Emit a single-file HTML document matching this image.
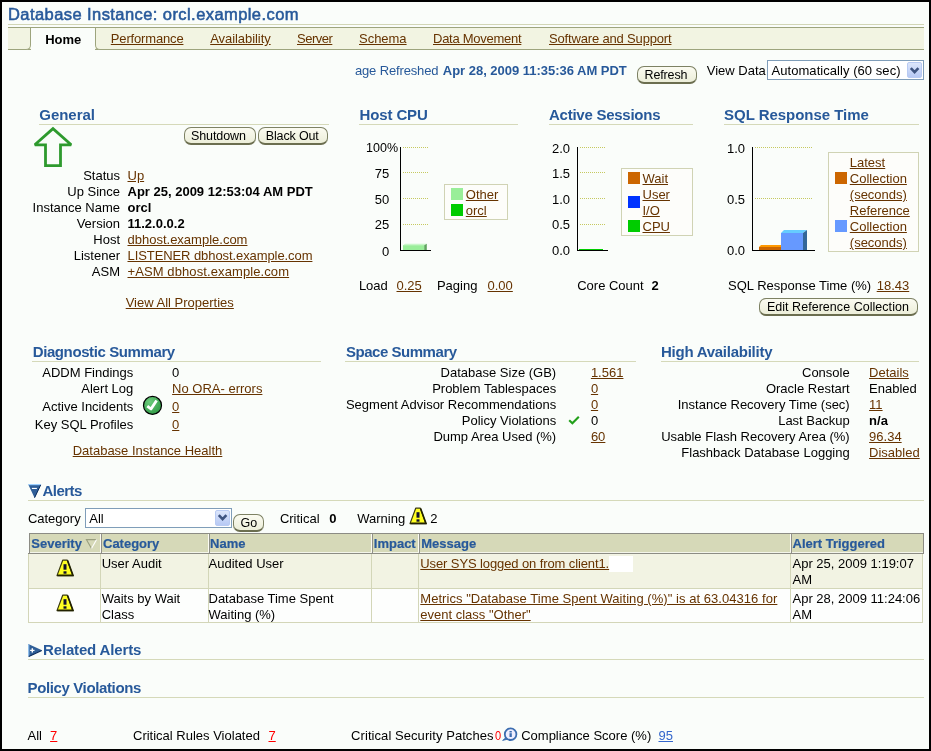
<!DOCTYPE html>
<html><head><meta charset="utf-8"><style>
html,body{margin:0;padding:0;width:931px;height:751px;overflow:hidden;background:#000}
#pg{position:absolute;left:2px;top:2px;width:927px;height:747px;background:#fafdfa;overflow:hidden}
#in{position:absolute;left:-2px;top:-2px;width:931px;height:751px}
.t{position:absolute;white-space:nowrap;line-height:16px;font-family:"Liberation Sans",sans-serif}
#in{will-change:transform}
</style></head><body><div id="pg"><div id="in">
<div class="t" style="left:8.00px;top:6.00px;font-size:16.5px;color:#27599a;letter-spacing:0.425px;-webkit-text-stroke:0.55px #27599a;">Database Instance: orcl.example.com</div>
<div style="position:absolute;left:8px;top:24px;width:916px;height:1px;background:#d2d6b6"></div>
<div style="position:absolute;left:8px;top:27px;width:916px;height:1px;background:#9da47d"></div>
<div style="position:absolute;left:8px;top:28px;width:916px;height:21px;background:#f2f4e2"></div>
<div style="position:absolute;left:8px;top:49px;width:916px;height:1px;background:#9da47d"></div>
<div style="position:absolute;left:8px;top:28px;width:23px;height:22px;box-sizing:border-box;background:#f2f4e2;border-right:1px solid #9da47d;border-bottom:1px solid #9da47d;border-bottom-right-radius:5px"></div>
<div style="position:absolute;left:31px;top:28px;width:64px;height:22px;background:#fafdfa"></div>
<div style="position:absolute;left:95px;top:28px;width:20px;height:22px;box-sizing:border-box;background:#f2f4e2;border-left:1px solid #9da47d;border-bottom:1px solid #9da47d;border-bottom-left-radius:5px"></div>
<div class="t" style="left:45.20px;top:32.00px;font-size:13px;font-weight:bold;color:#000;">Home</div>
<div class="t" style="left:110.80px;top:31.00px;font-size:13px;color:#663300;text-decoration:underline;letter-spacing:-0.161px;">Performance</div>
<div class="t" style="left:210.20px;top:31.00px;font-size:13px;color:#663300;text-decoration:underline;letter-spacing:-0.062px;">Availability</div>
<div class="t" style="left:297.00px;top:31.00px;font-size:13px;color:#663300;text-decoration:underline;letter-spacing:-0.497px;">Server</div>
<div class="t" style="left:359.00px;top:31.00px;font-size:13px;color:#663300;text-decoration:underline;letter-spacing:-0.018px;">Schema</div>
<div class="t" style="left:433.00px;top:31.00px;font-size:13px;color:#663300;text-decoration:underline;letter-spacing:-0.263px;">Data Movement</div>
<div class="t" style="left:549.00px;top:31.00px;font-size:13px;color:#663300;text-decoration:underline;letter-spacing:-0.165px;">Software and Support</div>
<div class="t" style="left:354.90px;top:63.00px;font-size:13px;color:#27599a;letter-spacing:-0.139px;">age Refreshed</div>
<div class="t" style="left:442.80px;top:63.00px;font-size:13px;font-weight:bold;color:#27599a;letter-spacing:-0.018px;">Apr 28, 2009 11:35:36 AM PDT</div>
<div style="position:absolute;left:637px;top:66px;width:60px;height:18px;box-sizing:border-box;border:1px solid #7d8163;border-bottom:2px solid #6b6e4f;border-radius:7px;background:linear-gradient(#fbfbf1,#eceed9);"></div>
<div class="t" style="left:644.50px;top:67.00px;font-size:12.5px;color:#000;letter-spacing:-0.128px;">Refresh</div>
<div class="t" style="left:706.80px;top:63.00px;font-size:13px;color:#000;">View Data</div>
<div style="position:absolute;left:767px;top:60px;width:157px;height:20px;box-sizing:border-box;border:1px solid #7f9db9;background:#fff"></div>
<div style="position:absolute;left:907px;top:62px;width:15px;height:16px;box-sizing:border-box;border:1px solid #b9cbf3;background:linear-gradient(#dce6fb,#b7c9f4);border-radius:2px"></div>
<svg style="position:absolute;left:909px;top:65.5px" width="12" height="10"><path d="M1.8 2.2 L5.6 6.2 L9.4 2.2" stroke="#3e5480" stroke-width="2.6" fill="none"/></svg>
<div class="t" style="left:771.50px;top:63.00px;font-size:13px;color:#000;letter-spacing:0.054px;">Automatically (60 sec)</div>
<div class="t" style="left:39.30px;top:107.00px;font-size:15px;font-weight:bold;color:#27599a;letter-spacing:-0.043px;">General</div>
<div style="position:absolute;left:38.8px;top:124px;width:290.2px;height:1px;background:#d5d9b9"></div>
<div style="position:absolute;left:184px;top:127px;width:72px;height:18px;box-sizing:border-box;border:1px solid #7d8163;border-bottom:2px solid #6b6e4f;border-radius:7px;background:linear-gradient(#fbfbf1,#eceed9);"></div>
<div class="t" style="left:191.00px;top:128.00px;font-size:12.5px;color:#000;letter-spacing:-0.085px;">Shutdown</div>
<div style="position:absolute;left:258px;top:127px;width:70px;height:18px;box-sizing:border-box;border:1px solid #7d8163;border-bottom:2px solid #6b6e4f;border-radius:7px;background:linear-gradient(#fbfbf1,#eceed9);"></div>
<div class="t" style="left:265.80px;top:128.00px;font-size:12.5px;color:#000;letter-spacing:-0.148px;">Black Out</div>
<svg style="position:absolute;left:30px;top:124px" width="46" height="46"><path d="M23 4.6 L4.8 20.8 L15.5 20.8 L15.5 41.6 L30.5 41.6 L30.5 20.8 L41.2 20.8 Z" fill="none" stroke="#2e9a2e" stroke-width="2.8" stroke-miterlimit="1.6"/></svg>
<div class="t" style="right:811.00px;top:168.00px;font-size:13px;color:#000;">Status</div>
<div class="t" style="left:127.50px;top:168.00px;font-size:13px;color:#663300;text-decoration:underline;">Up</div>
<div class="t" style="right:811.00px;top:184.00px;font-size:13px;color:#000;">Up Since</div>
<div class="t" style="left:127.50px;top:184.00px;font-size:13px;font-weight:bold;color:#000;">Apr 25, 2009 12:53:04 AM PDT</div>
<div class="t" style="right:811.00px;top:200.00px;font-size:13px;color:#000;">Instance Name</div>
<div class="t" style="left:127.50px;top:200.00px;font-size:13px;font-weight:bold;color:#000;">orcl</div>
<div class="t" style="right:811.00px;top:216.00px;font-size:13px;color:#000;">Version</div>
<div class="t" style="left:127.50px;top:216.00px;font-size:13px;font-weight:bold;color:#000;">11.2.0.0.2</div>
<div class="t" style="right:811.00px;top:232.00px;font-size:13px;color:#000;">Host</div>
<div class="t" style="left:127.50px;top:232.00px;font-size:13px;color:#663300;text-decoration:underline;">dbhost.example.com</div>
<div class="t" style="right:811.00px;top:248.00px;font-size:13px;color:#000;">Listener</div>
<div class="t" style="left:127.50px;top:248.00px;font-size:13px;color:#663300;text-decoration:underline;letter-spacing:-0.082px;">LISTENER dbhost.example.com</div>
<div class="t" style="right:811.00px;top:264.00px;font-size:13px;color:#000;">ASM</div>
<div class="t" style="left:127.50px;top:264.00px;font-size:13px;color:#663300;text-decoration:underline;letter-spacing:0.099px;">+ASM dbhost.example.com</div>
<div class="t" style="left:125.70px;top:295.00px;font-size:13px;color:#663300;text-decoration:underline;">View All Properties</div>
<div class="t" style="left:359.50px;top:107.00px;font-size:15px;font-weight:bold;color:#27599a;letter-spacing:-0.124px;">Host CPU</div>
<div style="position:absolute;left:359px;top:124px;width:159px;height:1px;background:#d5d9b9"></div>
<div style="position:absolute;left:400px;top:147px;width:1px;height:104px;background:#000"></div>
<div style="position:absolute;left:400px;top:250px;width:31px;height:1px;background:#000"></div>
<div style="position:absolute;left:403px;top:147px;width:25px;height:1px;background:repeating-linear-gradient(90deg,#c6c960 0 1px,transparent 1px 2px)"></div>
<div style="position:absolute;left:403px;top:172px;width:25px;height:1px;background:repeating-linear-gradient(90deg,#c6c960 0 1px,transparent 1px 2px)"></div>
<div class="t" style="right:541.70px;top:165.50px;font-size:13px;color:#000;">75</div>
<div style="position:absolute;left:403px;top:198px;width:25px;height:1px;background:repeating-linear-gradient(90deg,#c6c960 0 1px,transparent 1px 2px)"></div>
<div class="t" style="right:541.70px;top:191.50px;font-size:13px;color:#000;">50</div>
<div style="position:absolute;left:403px;top:224px;width:25px;height:1px;background:repeating-linear-gradient(90deg,#c6c960 0 1px,transparent 1px 2px)"></div>
<div class="t" style="right:541.70px;top:217.00px;font-size:13px;color:#000;">25</div>
<div class="t" style="right:541.70px;top:243.50px;font-size:13px;color:#000;">0</div>
<div class="t" style="left:366.10px;top:140.00px;font-size:12.5px;color:#000;letter-spacing:0.010px;">100%</div>
<svg style="position:absolute;left:402px;top:242px" width="30" height="9"><path d="M1 3.2 L3 1.8 L24.8 1.8 L22.2 3.2 Z" fill="#c8f7c8"/><path d="M1 3.2 L22.2 3.2 L22.2 8 L1 8Z" fill="#99ee99"/><path d="M22.2 3.2 L24.8 1.8 L24.8 8 L22.2 8Z" fill="#5fa55f"/></svg>
<div style="position:absolute;left:444px;top:184px;width:64px;height:36px;box-sizing:border-box;border:1px solid #d0d3b4;background:#fdfdfa"></div>
<div style="position:absolute;left:451px;top:188px;width:12px;height:12px;background:#99ee99"></div>
<div style="position:absolute;left:451px;top:204px;width:12px;height:12px;background:#00cc00"></div>
<div class="t" style="left:465.80px;top:187.00px;font-size:13px;color:#663300;text-decoration:underline;">Other</div>
<div class="t" style="left:465.80px;top:203.00px;font-size:13px;color:#663300;text-decoration:underline;">orcl</div>
<div class="t" style="left:358.90px;top:278.00px;font-size:13px;color:#000;">Load</div>
<div class="t" style="left:396.50px;top:278.00px;font-size:13px;color:#663300;text-decoration:underline;">0.25</div>
<div class="t" style="left:436.90px;top:278.00px;font-size:13px;color:#000;">Paging</div>
<div class="t" style="left:487.50px;top:278.00px;font-size:13px;color:#663300;text-decoration:underline;">0.00</div>
<div class="t" style="left:549.00px;top:107.00px;font-size:15px;font-weight:bold;color:#27599a;letter-spacing:-0.253px;">Active Sessions</div>
<div style="position:absolute;left:548.5px;top:124px;width:144.5px;height:1px;background:#d5d9b9"></div>
<div style="position:absolute;left:577px;top:147px;width:1px;height:104px;background:#000"></div>
<div style="position:absolute;left:577px;top:250px;width:31px;height:1px;background:#000"></div>
<div style="position:absolute;left:580px;top:147px;width:25px;height:1px;background:repeating-linear-gradient(90deg,#c6c960 0 1px,transparent 1px 2px)"></div>
<div class="t" style="right:361.00px;top:140.50px;font-size:13px;color:#000;">2.0</div>
<div style="position:absolute;left:580px;top:172px;width:25px;height:1px;background:repeating-linear-gradient(90deg,#c6c960 0 1px,transparent 1px 2px)"></div>
<div class="t" style="right:361.00px;top:166.00px;font-size:13px;color:#000;">1.5</div>
<div style="position:absolute;left:580px;top:198px;width:25px;height:1px;background:repeating-linear-gradient(90deg,#c6c960 0 1px,transparent 1px 2px)"></div>
<div class="t" style="right:361.00px;top:191.50px;font-size:13px;color:#000;">1.0</div>
<div style="position:absolute;left:580px;top:224px;width:25px;height:1px;background:repeating-linear-gradient(90deg,#c6c960 0 1px,transparent 1px 2px)"></div>
<div class="t" style="right:361.00px;top:217.00px;font-size:13px;color:#000;">0.5</div>
<div class="t" style="right:361.00px;top:243.00px;font-size:13px;color:#000;">0.0</div>
<div style="position:absolute;left:579px;top:248px;width:24px;height:2px;background:#00cc00;height:1.5px;top:248.5px"></div>
<div style="position:absolute;left:621px;top:168px;width:72px;height:68px;box-sizing:border-box;border:1px solid #d0d3b4;background:#fdfdfa"></div>
<div style="position:absolute;left:628px;top:172px;width:12px;height:12px;background:#cc6600"></div>
<div style="position:absolute;left:628px;top:196px;width:12px;height:12px;background:#0033ff"></div>
<div style="position:absolute;left:628px;top:220px;width:12px;height:12px;background:#00cc00"></div>
<div class="t" style="left:642.50px;top:171.00px;font-size:13px;color:#663300;text-decoration:underline;">Wait</div>
<div class="t" style="left:642.50px;top:187.00px;font-size:13px;color:#663300;text-decoration:underline;">User</div>
<div class="t" style="left:642.50px;top:203.00px;font-size:13px;color:#663300;text-decoration:underline;">I/O</div>
<div class="t" style="left:642.50px;top:219.00px;font-size:13px;color:#663300;text-decoration:underline;">CPU</div>
<div class="t" style="left:577.20px;top:278.00px;font-size:13px;color:#000;">Core Count</div>
<div class="t" style="left:651.50px;top:278.00px;font-size:13px;font-weight:bold;color:#000;">2</div>
<div class="t" style="left:724.10px;top:107.00px;font-size:15px;font-weight:bold;color:#27599a;letter-spacing:-0.039px;">SQL Response Time</div>
<div style="position:absolute;left:723.6px;top:124px;width:195.39999999999998px;height:1px;background:#d5d9b9"></div>
<div style="position:absolute;left:752px;top:147px;width:1px;height:104px;background:#000"></div>
<div style="position:absolute;left:752px;top:250px;width:63px;height:1px;background:#000"></div>
<div style="position:absolute;left:755px;top:147px;width:57px;height:1px;background:repeating-linear-gradient(90deg,#c6c960 0 1px,transparent 1px 2px)"></div>
<div class="t" style="right:186.00px;top:141.00px;font-size:13px;color:#000;">1.0</div>
<div style="position:absolute;left:755px;top:198px;width:57px;height:1px;background:repeating-linear-gradient(90deg,#c6c960 0 1px,transparent 1px 2px)"></div>
<div class="t" style="right:186.00px;top:191.50px;font-size:13px;color:#000;">0.5</div>
<div class="t" style="right:186.00px;top:243.00px;font-size:13px;color:#000;">0.0</div>
<svg style="position:absolute;left:754px;top:228px" width="56" height="23"><path d="M5 19 L7 17 L29 17 L27 19Z" fill="#ff9900"/><path d="M5 19 L27 19 L27 22 L5 22Z" fill="#cc6600"/><path d="M27 5 L30 2 L53 2 L49 5Z" fill="#66ccff"/><path d="M27 5 L49 5 L49 22 L27 22Z" fill="#6699ff"/><path d="M49 5 L53 2 L53 22 L49 22Z" fill="#336699"/></svg>
<div style="position:absolute;left:828px;top:152px;width:91px;height:100px;box-sizing:border-box;border:1px solid #d0d3b4;background:#fdfdfa"></div>
<div style="position:absolute;left:835px;top:172px;width:12px;height:12px;background:#cc6600"></div>
<div style="position:absolute;left:835px;top:220px;width:12px;height:12px;background:#6699ff"></div>
<div class="t" style="left:849.80px;top:155.00px;font-size:13px;color:#663300;text-decoration:underline;">Latest</div>
<div class="t" style="left:849.80px;top:171.00px;font-size:13px;color:#663300;text-decoration:underline;">Collection</div>
<div class="t" style="left:849.80px;top:187.00px;font-size:13px;color:#663300;text-decoration:underline;">(seconds)</div>
<div class="t" style="left:849.80px;top:203.00px;font-size:13px;color:#663300;text-decoration:underline;">Reference</div>
<div class="t" style="left:849.80px;top:219.00px;font-size:13px;color:#663300;text-decoration:underline;">Collection</div>
<div class="t" style="left:849.80px;top:235.00px;font-size:13px;color:#663300;text-decoration:underline;">(seconds)</div>
<div class="t" style="left:728.10px;top:278.00px;font-size:13px;color:#000;letter-spacing:-0.014px;">SQL Response Time (%)</div>
<div class="t" style="left:876.70px;top:278.00px;font-size:13px;color:#663300;text-decoration:underline;">18.43</div>
<div style="position:absolute;left:759px;top:298px;width:159px;height:18px;box-sizing:border-box;border:1px solid #7d8163;border-bottom:2px solid #6b6e4f;border-radius:7px;background:linear-gradient(#fbfbf1,#eceed9);"></div>
<div class="t" style="left:766.90px;top:299.00px;font-size:12.5px;color:#000;letter-spacing:0.040px;">Edit Reference Collection</div>
<div class="t" style="left:32.70px;top:344.00px;font-size:15px;font-weight:bold;color:#27599a;letter-spacing:-0.394px;">Diagnostic Summary</div>
<div style="position:absolute;left:32.2px;top:361px;width:288.8px;height:1px;background:#d5d9b9"></div>
<div class="t" style="right:797.70px;top:365.00px;font-size:13px;color:#000;">ADDM Findings</div>
<div class="t" style="right:797.70px;top:381.00px;font-size:13px;color:#000;">Alert Log</div>
<div class="t" style="right:797.70px;top:399.00px;font-size:13px;color:#000;">Active Incidents</div>
<div class="t" style="right:797.70px;top:417.00px;font-size:13px;color:#000;">Key SQL Profiles</div>
<div class="t" style="left:172.10px;top:365.00px;font-size:13px;color:#000;">0</div>
<div class="t" style="left:172.10px;top:381.00px;font-size:13px;color:#663300;text-decoration:underline;">No ORA- errors</div>
<div class="t" style="left:172.10px;top:399.00px;font-size:13px;color:#663300;text-decoration:underline;">0</div>
<div class="t" style="left:172.10px;top:417.00px;font-size:13px;color:#663300;text-decoration:underline;">0</div>
<svg style="position:absolute;left:142px;top:395px" width="21" height="21"><defs><radialGradient id="cg" cx="35%" cy="30%" r="75%"><stop offset="0" stop-color="#6ccc7c"/><stop offset="1" stop-color="#2f9a45"/></radialGradient></defs><circle cx="10.5" cy="10.4" r="9" fill="url(#cg)" stroke="#000" stroke-width="1.2"/><path d="M5.3 11.2 L9 14 L14.6 5.4" stroke="#fff" stroke-width="2.8" fill="none" stroke-linejoin="round"/></svg>
<div class="t" style="left:72.70px;top:443.00px;font-size:13px;color:#663300;text-decoration:underline;">Database Instance Health</div>
<div class="t" style="left:345.90px;top:344.00px;font-size:15px;font-weight:bold;color:#27599a;letter-spacing:-0.460px;">Space Summary</div>
<div style="position:absolute;left:345.4px;top:361px;width:290.6px;height:1px;background:#d5d9b9"></div>
<div class="t" style="right:374.80px;top:365.00px;font-size:13px;color:#000;">Database Size (GB)</div>
<div class="t" style="left:590.90px;top:365.00px;font-size:13px;color:#663300;text-decoration:underline;">1.561</div>
<div class="t" style="right:374.80px;top:381.00px;font-size:13px;color:#000;">Problem Tablespaces</div>
<div class="t" style="left:590.90px;top:381.00px;font-size:13px;color:#663300;text-decoration:underline;">0</div>
<div class="t" style="right:374.80px;top:397.00px;font-size:13px;color:#000;">Segment Advisor Recommendations</div>
<div class="t" style="left:590.90px;top:397.00px;font-size:13px;color:#663300;text-decoration:underline;">0</div>
<div class="t" style="right:374.80px;top:413.00px;font-size:13px;color:#000;">Policy Violations</div>
<div class="t" style="left:590.90px;top:413.00px;font-size:13px;color:#000;">0</div>
<div class="t" style="right:374.80px;top:429.00px;font-size:13px;color:#000;">Dump Area Used (%)</div>
<div class="t" style="left:590.90px;top:429.00px;font-size:13px;color:#663300;text-decoration:underline;">60</div>
<svg style="position:absolute;left:568px;top:415px" width="14" height="11"><path d="M1.2 5.2 L4.4 8.3 L10.8 1.8" stroke="#22a01a" stroke-width="2.1" fill="none"/></svg>
<div class="t" style="left:661.00px;top:344.00px;font-size:15px;font-weight:bold;color:#27599a;letter-spacing:-0.254px;">High Availability</div>
<div style="position:absolute;left:660.5px;top:361px;width:258.5px;height:1px;background:#d5d9b9"></div>
<div class="t" style="right:81.30px;top:365.00px;font-size:13px;color:#000;">Console</div>
<div class="t" style="left:869.10px;top:365.00px;font-size:13px;color:#663300;text-decoration:underline;">Details</div>
<div class="t" style="right:81.30px;top:381.00px;font-size:13px;color:#000;">Oracle Restart</div>
<div class="t" style="left:869.10px;top:381.00px;font-size:13px;color:#000;">Enabled</div>
<div class="t" style="right:81.30px;top:397.00px;font-size:13px;color:#000;">Instance Recovery Time (sec)</div>
<div class="t" style="left:869.10px;top:397.00px;font-size:13px;color:#663300;text-decoration:underline;">11</div>
<div class="t" style="right:81.30px;top:413.00px;font-size:13px;color:#000;">Last Backup</div>
<div class="t" style="left:869.10px;top:413.00px;font-size:13px;font-weight:bold;color:#000;">n/a</div>
<div class="t" style="right:81.30px;top:429.00px;font-size:13px;color:#000;">Usable Flash Recovery Area (%)</div>
<div class="t" style="left:869.10px;top:429.00px;font-size:13px;color:#663300;text-decoration:underline;">96.34</div>
<div class="t" style="right:81.30px;top:445.00px;font-size:13px;color:#000;">Flashback Database Logging</div>
<div class="t" style="left:869.10px;top:445.00px;font-size:13px;color:#663300;text-decoration:underline;">Disabled</div>
<svg style="position:absolute;left:28px;top:484px" width="14" height="15"><path d="M0.3 0.4 L12.9 0.4 L6.6 13.9 Z" fill="#2f5f98"/><path d="M0.4 0.6 L12.8 0.6" stroke="#9cd0ff" stroke-width="1.2"/><path d="M12.7 0.9 L6.6 13.7" stroke="#0a2a5a" stroke-width="1"/><rect x="3.9" y="3.9" width="5" height="1.1" fill="#fff"/></svg>
<div class="t" style="left:42.40px;top:483.00px;font-size:15px;font-weight:bold;color:#27599a;letter-spacing:-0.503px;">Alerts</div>
<div style="position:absolute;left:28px;top:500px;width:896px;height:1px;background:#d5d9b9"></div>
<div class="t" style="left:27.90px;top:511.00px;font-size:13px;color:#000;">Category</div>
<div style="position:absolute;left:85px;top:508px;width:147px;height:20px;box-sizing:border-box;border:1px solid #7f9db9;background:#fff"></div>
<div style="position:absolute;left:215px;top:510px;width:15px;height:16px;box-sizing:border-box;border:1px solid #b9cbf3;background:linear-gradient(#dce6fb,#b7c9f4);border-radius:2px"></div>
<svg style="position:absolute;left:217px;top:513px" width="12" height="10"><path d="M1.8 2.2 L5.6 6.2 L9.4 2.2" stroke="#3e5480" stroke-width="2.6" fill="none"/></svg>
<div class="t" style="left:89.30px;top:511.00px;font-size:13px;color:#000;">All</div>
<div style="position:absolute;left:233px;top:514px;width:31px;height:18px;box-sizing:border-box;border:1px solid #7d8163;border-bottom:2px solid #6b6e4f;border-radius:7px;background:linear-gradient(#fbfbf1,#eceed9);"></div>
<div class="t" style="left:240.50px;top:515.00px;font-size:12.5px;color:#000;">Go</div>
<div class="t" style="left:279.90px;top:511.00px;font-size:13px;color:#000;">Critical</div>
<div class="t" style="left:329.30px;top:511.00px;font-size:13px;font-weight:bold;color:#000;">0</div>
<div class="t" style="left:357.20px;top:511.00px;font-size:13px;color:#000;">Warning</div>
<svg style="position:absolute;left:409px;top:506.5px" width="18" height="18"><path d="M6.7 1.2 L11.3 1.2 L16.9 16.6 L1 16.6Z" fill="#ffff22" stroke="#3a3a10" stroke-width="1.2" stroke-linejoin="round"/><path d="M11.6 1.6 L17 16.4 L1.4 16.4" fill="none" stroke="#222200" stroke-width="1.6"/><rect x="7.5" y="5.2" width="3" height="5.5" fill="#101030"/><rect x="7.5" y="12.3" width="3" height="2.4" fill="#101030"/></svg>
<div class="t" style="left:430.30px;top:511.00px;font-size:13px;color:#000;">2</div>
<div style="position:absolute;left:28px;top:554px;width:895px;height:69px;background:#fdfefd"></div>
<div style="position:absolute;left:29px;top:534px;width:895px;height:18px;background:#d6d9b8"></div>
<div style="position:absolute;left:29px;top:552px;width:895px;height:1px;background:#f4f5ea"></div>
<div style="position:absolute;left:28px;top:554px;width:895px;height:34px;background:#f2f3e3"></div>
<div style="position:absolute;left:29px;top:533px;width:895px;height:1px;background:#8c8c84"></div>
<div style="position:absolute;left:28px;top:553px;width:896px;height:1px;background:#8c8c84"></div>
<div style="position:absolute;left:29px;top:533px;width:1px;height:20px;background:#8c8c84"></div>
<div style="position:absolute;left:923px;top:533px;width:1px;height:20px;background:#8c8c84"></div>
<div style="position:absolute;left:100px;top:534px;width:1px;height:18px;background:#fbfbf3"></div>
<div style="position:absolute;left:101px;top:534px;width:1px;height:19px;background:#8f9088"></div>
<div style="position:absolute;left:100px;top:554px;width:1px;height:68px;background:#d3d6b8"></div>
<div style="position:absolute;left:208px;top:534px;width:1px;height:18px;background:#fbfbf3"></div>
<div style="position:absolute;left:209px;top:534px;width:1px;height:19px;background:#8f9088"></div>
<div style="position:absolute;left:208px;top:554px;width:1px;height:68px;background:#d3d6b8"></div>
<div style="position:absolute;left:371px;top:534px;width:1px;height:18px;background:#fbfbf3"></div>
<div style="position:absolute;left:372px;top:534px;width:1px;height:19px;background:#8f9088"></div>
<div style="position:absolute;left:371px;top:554px;width:1px;height:68px;background:#d3d6b8"></div>
<div style="position:absolute;left:418px;top:534px;width:1px;height:18px;background:#fbfbf3"></div>
<div style="position:absolute;left:419px;top:534px;width:1px;height:19px;background:#8f9088"></div>
<div style="position:absolute;left:418px;top:554px;width:1px;height:68px;background:#d3d6b8"></div>
<div style="position:absolute;left:790px;top:534px;width:1px;height:18px;background:#fbfbf3"></div>
<div style="position:absolute;left:791px;top:534px;width:1px;height:19px;background:#8f9088"></div>
<div style="position:absolute;left:790px;top:554px;width:1px;height:68px;background:#d3d6b8"></div>
<div style="position:absolute;left:28px;top:554px;width:1px;height:69px;background:#d3d6b8"></div>
<div style="position:absolute;left:922px;top:554px;width:1px;height:69px;background:#d3d6b8"></div>
<div style="position:absolute;left:28px;top:588px;width:895px;height:1px;background:#d3d6b8"></div>
<div style="position:absolute;left:28px;top:622px;width:895px;height:1px;background:#d3d6b8"></div>
<div style="position:absolute;left:609px;top:556px;width:24px;height:16px;background:#ffffff"></div>
<div class="t" style="left:31.30px;top:536.00px;font-size:13px;font-weight:bold;color:#27599a;-webkit-text-stroke:0.2px #27599a;">Severity</div>
<div class="t" style="left:103.00px;top:536.00px;font-size:13px;font-weight:bold;color:#27599a;-webkit-text-stroke:0.2px #27599a;">Category</div>
<div class="t" style="left:210.10px;top:536.00px;font-size:13px;font-weight:bold;color:#27599a;-webkit-text-stroke:0.2px #27599a;">Name</div>
<div class="t" style="left:373.80px;top:536.00px;font-size:13px;font-weight:bold;color:#27599a;-webkit-text-stroke:0.2px #27599a;">Impact</div>
<div class="t" style="left:421.20px;top:536.00px;font-size:13px;font-weight:bold;color:#27599a;-webkit-text-stroke:0.2px #27599a;">Message</div>
<div class="t" style="left:792.50px;top:536.00px;font-size:13px;font-weight:bold;color:#27599a;-webkit-text-stroke:0.2px #27599a;">Alert Triggered</div>
<svg style="position:absolute;left:85px;top:538px" width="13" height="12"><path d="M6.5 10.6 L1.4 1.6 L11.6 1.6" fill="none" stroke="#9a9f7f" stroke-width="1.1"/><path d="M11.6 1.6 L6.5 10.6" fill="none" stroke="#ffffff" stroke-width="1.1"/></svg>
<svg style="position:absolute;left:56px;top:559px" width="18" height="18"><path d="M6.7 1.2 L11.3 1.2 L16.9 16.6 L1 16.6Z" fill="#ffff22" stroke="#3a3a10" stroke-width="1.2" stroke-linejoin="round"/><path d="M11.6 1.6 L17 16.4 L1.4 16.4" fill="none" stroke="#222200" stroke-width="1.6"/><rect x="7.5" y="5.2" width="3" height="5.5" fill="#101030"/><rect x="7.5" y="12.3" width="3" height="2.4" fill="#101030"/></svg>
<svg style="position:absolute;left:56px;top:594px" width="18" height="18"><path d="M6.7 1.2 L11.3 1.2 L16.9 16.6 L1 16.6Z" fill="#ffff22" stroke="#3a3a10" stroke-width="1.2" stroke-linejoin="round"/><path d="M11.6 1.6 L17 16.4 L1.4 16.4" fill="none" stroke="#222200" stroke-width="1.6"/><rect x="7.5" y="5.2" width="3" height="5.5" fill="#101030"/><rect x="7.5" y="12.3" width="3" height="2.4" fill="#101030"/></svg>
<div class="t" style="left:101.70px;top:556.00px;font-size:13px;color:#000;">User Audit</div>
<div class="t" style="left:208.50px;top:556.00px;font-size:13px;color:#000;">Audited User</div>
<div class="t" style="left:420.30px;top:556.00px;font-size:13px;color:#663300;text-decoration:underline;letter-spacing:-0.106px;">User SYS logged on from client1.</div>
<div class="t" style="left:792.50px;top:556.00px;font-size:13px;color:#000;">Apr 25, 2009 1:19:07</div>
<div class="t" style="left:792.50px;top:572.00px;font-size:13px;color:#000;">AM</div>
<div class="t" style="left:101.70px;top:591.00px;font-size:13px;color:#000;">Waits by Wait</div>
<div class="t" style="left:101.70px;top:607.00px;font-size:13px;color:#000;">Class</div>
<div class="t" style="left:208.50px;top:591.00px;font-size:13px;color:#000;">Database Time Spent</div>
<div class="t" style="left:208.50px;top:607.00px;font-size:13px;color:#000;">Waiting (%)</div>
<div class="t" style="left:420.30px;top:591.00px;font-size:13px;color:#663300;text-decoration:underline;letter-spacing:0.049px;">Metrics "Database Time Spent Waiting (%)" is at 63.04316 for</div>
<div class="t" style="left:420.30px;top:607.00px;font-size:13px;color:#663300;text-decoration:underline;">event class "Other"</div>
<div class="t" style="left:792.50px;top:591.00px;font-size:13px;color:#000;">Apr 28, 2009 11:24:06</div>
<div class="t" style="left:792.50px;top:607.00px;font-size:13px;color:#000;">AM</div>
<svg style="position:absolute;left:28px;top:644px" width="15" height="14"><path d="M0.3 0 L14 6.3 L0.3 12.8 Z" fill="#2f5f98"/><path d="M0.8 0.5 L0.8 12.3" stroke="#9cd0ff" stroke-width="1"/><path d="M0.8 12.4 L13.8 6.4" stroke="#0a2a5a" stroke-width="1.1"/><path d="M2.1 6.4 L6.5 6.4 M4.3 4.2 L4.3 8.6" stroke="#fff" stroke-width="1.4"/></svg>
<div class="t" style="left:43.00px;top:642.00px;font-size:15px;font-weight:bold;color:#27599a;letter-spacing:-0.154px;">Related Alerts</div>
<div style="position:absolute;left:28px;top:659px;width:896px;height:1px;background:#d5d9b9"></div>
<div class="t" style="left:27.50px;top:680.00px;font-size:15px;font-weight:bold;color:#27599a;letter-spacing:-0.372px;">Policy Violations</div>
<div style="position:absolute;left:28px;top:697px;width:896px;height:1px;background:#d5d9b9"></div>
<div class="t" style="left:27.50px;top:728.00px;font-size:13px;color:#000;">All</div>
<div class="t" style="left:50.10px;top:728.00px;font-size:13px;color:#ff0000;text-decoration:underline;">7</div>
<div class="t" style="left:133.00px;top:728.00px;font-size:13px;color:#000;">Critical Rules Violated</div>
<div class="t" style="left:268.50px;top:728.00px;font-size:13px;color:#ff0000;text-decoration:underline;">7</div>
<div class="t" style="left:351.10px;top:728.00px;font-size:13px;color:#000;letter-spacing:0.064px;">Critical Security Patches</div>
<div class="t" style="left:495.00px;top:728.00px;font-size:13px;color:#ff0000;transform:scaleX(0.85);transform-origin:left;">0</div>
<svg style="position:absolute;left:502px;top:726px" width="17" height="16"><path d="M3.9 11.6 L0.6 14.4 L5.8 13.2Z" fill="#3c6db0" stroke="#3c6db0" stroke-width="0.8"/><circle cx="8.6" cy="8.2" r="5.8" fill="#eeeeff" stroke="#3c6db0" stroke-width="1.8"/><rect x="7.5" y="7.2" width="2.3" height="3.8" fill="#3c6db0"/><rect x="7.5" y="5" width="2.3" height="1.5" fill="#3c6db0"/></svg>
<div class="t" style="left:521.20px;top:728.00px;font-size:13px;color:#000;">Compliance Score (%)</div>
<div class="t" style="left:658.50px;top:728.00px;font-size:13px;color:#3366cc;text-decoration:underline;">95</div>
</div></div></body></html>
